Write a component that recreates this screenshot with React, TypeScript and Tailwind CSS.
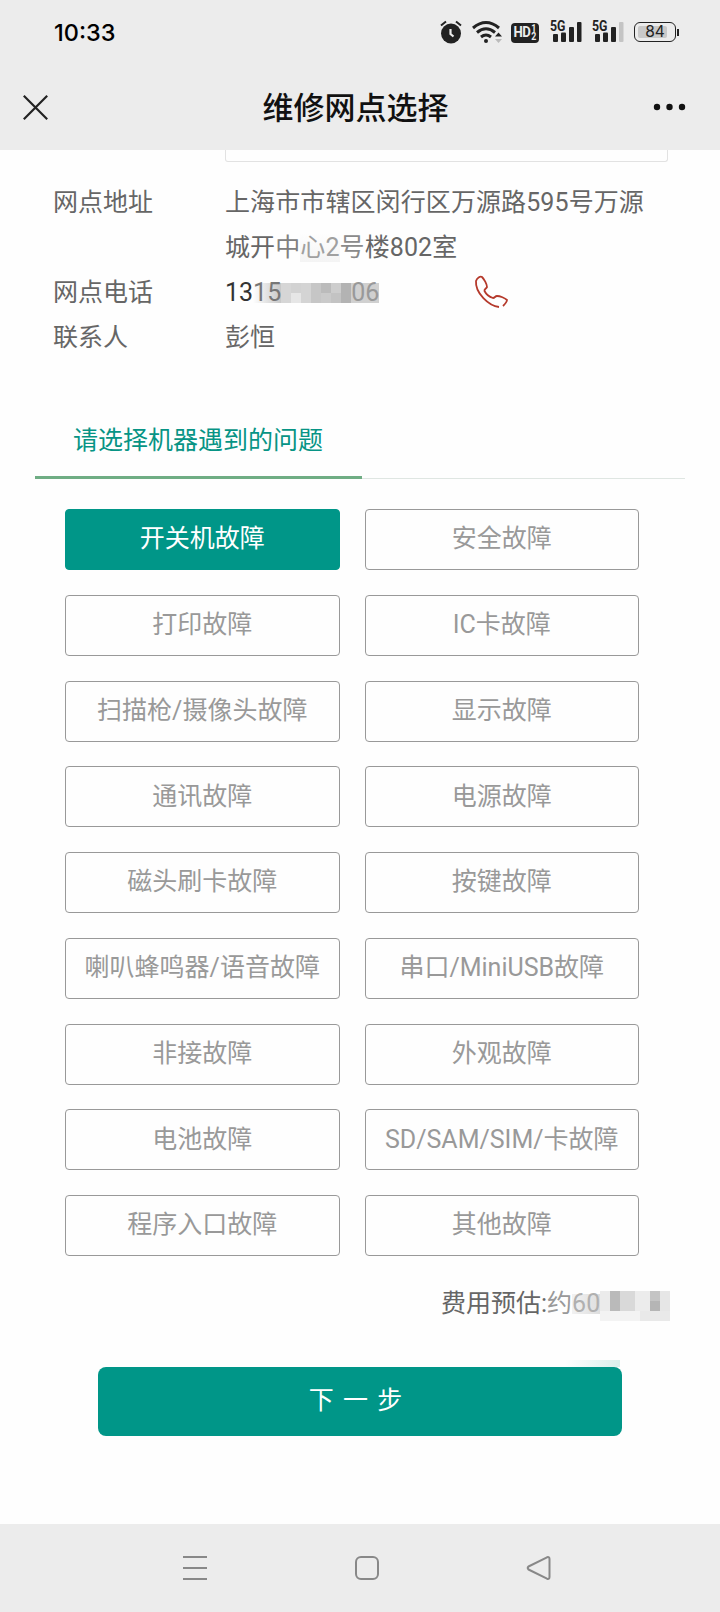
type Tile = { x: number; y: number; w: number; h: number; color: string };

const faults = [
  "开关机故障",
  "安全故障",
  "打印故障",
  "IC卡故障",
  "扫描枪/摄像头故障",
  "显示故障",
  "通讯故障",
  "电源故障",
  "磁头刷卡故障",
  "按键故障",
  "喇叭蜂鸣器/语音故障",
  "串口/MiniUSB故障",
  "非接故障",
  "外观故障",
  "电池故障",
  "SD/SAM/SIM/卡故障",
  "程序入口故障",
  "其他故障",
];

const phoneTiles: Tile[] = [
  { x: 0, y: 0, w: 10, h: 20, color: "#d6d6d6" },
  { x: 10, y: 0, w: 10, h: 10, color: "#d2d2d2" },
  { x: 10, y: 10, w: 10, h: 10, color: "#e6e6e6" },
  { x: 20, y: 0, w: 10, h: 20, color: "#d4d4d4" },
  { x: 30, y: 0, w: 10, h: 20, color: "#c6c6c6" },
  { x: 40, y: 0, w: 10, h: 10, color: "#bbbbbb" },
  { x: 40, y: 10, w: 10, h: 10, color: "#cacaca" },
  { x: 50, y: 0, w: 10, h: 10, color: "#cdcdcd" },
  { x: 50, y: 10, w: 10, h: 10, color: "#c3c3c3" },
  { x: 60, y: 0, w: 10, h: 20, color: "#b3b3b3" },
];

const feeTiles: Tile[] = [
  { x: 0, y: 0, w: 10, h: 20, color: "#ebebeb" },
  { x: 10, y: 0, w: 10, h: 20, color: "#bababa" },
  { x: 20, y: 0, w: 15, h: 20, color: "#d9d9d9" },
  { x: 35, y: 0, w: 15, h: 20, color: "#ececec" },
  { x: 50, y: 0, w: 10, h: 10, color: "#c4c4c4" },
  { x: 50, y: 10, w: 10, h: 10, color: "#b5b5b5" },
  { x: 60, y: 0, w: 10, h: 20, color: "#e6e6e6" },
  { x: 0, y: 20, w: 40, h: 10, color: "#f3f3f3" },
  { x: 40, y: 20, w: 30, h: 10, color: "#e9e9e9" },
];

function Mosaic({ tiles, className }: { tiles: Tile[]; className: string }) {
  return (
    <svg className={className} shapeRendering="crispEdges">
      {tiles.map((t, i) => (
        <rect key={i} x={t.x} y={t.y} width={t.w} height={t.h} fill={t.color} />
      ))}
    </svg>
  );
}

function Signal({ weak }: { weak?: boolean }) {
  return (
    <div className="relative h-[22px] w-[32px]">
      <svg className="absolute inset-0" width="32" height="22" fill="#222">
        <rect x="2" y="13" width="5" height="8" rx="1" />
        <rect x="10" y="11.500" width="5" height="9.500" rx="1" />
        <rect x="18" y="6" width="5" height="15" rx="1" />
        <rect x="26" y="1" width="4.500" height="20" rx="1" fill={weak ? "#c4c4c4" : "#222"} />
      </svg>
      <span className="absolute left-[-1px] top-[-2px] origin-left scale-x-[0.82] font-[Roboto] text-[15px] font-bold leading-[14px] text-[#222]">
        5G
      </span>
    </div>
  );
}

function StatusBar() {
  return (
    <div className="flex h-[64px] items-center justify-between pl-[54px] pr-[41px]">
      <span className="mt-[2px] font-[Inter] text-[23.5px] font-[450] text-black">10:33</span>
      <div className="flex items-center">
        {/* Alarm */}
        <svg width="22" height="24" viewBox="0 0 22 24">
          <circle cx="11" cy="13.500" r="10" fill="#222" />
          <path d="M1 5.5 6 1.5M21 5.5 16 1.5" stroke="#222" strokeWidth="2" />
          <path d="M10.500 9v5l3 2.500" stroke="#ececec" strokeWidth="2.200" fill="none" />
        </svg>
        {/* Wifi */}
        <svg className="ml-[10px]" width="30" height="24" viewBox="0 0 30 24" fill="none">
          <path d="M1 8Q14 -3 27 8" stroke="#222" strokeWidth="3" />
          <path d="M5 12.500Q14 5 23 12.500" stroke="#222" strokeWidth="3" />
          <path d="M9 17Q14 13 19 17" stroke="#222" strokeWidth="3" />
          <circle cx="14" cy="21" r="2" fill="#222" />
          <path d="m23 16.500 3.500-4 3.500 4z" fill="#222" />
          <path d="m23 19 3.500 4 3.500-4z" fill="#bbb" />
        </svg>
        {/* HD badge */}
        <div className="ml-[9px] mt-[1px] flex h-[20px] w-[28px] items-center justify-center rounded-[4px] bg-[#222] text-[#ececec]">
          <div className="flex scale-x-[0.88] items-center font-[Roboto] text-[15px] font-bold tracking-[-0.6px]">
            HD
            <span className="flex flex-col pl-px text-[10px] leading-[8px]">
              <span>1</span>
              <span>2</span>
            </span>
          </div>
        </div>
        <div className="ml-[12px]">
          <Signal />
        </div>
        <div className="ml-[10px]">
          <Signal weak />
        </div>
        {/* Battery */}
        <div className="relative ml-[9px] flex h-[20px] w-[42px] items-center justify-center rounded-[6px] border-[1.5px] border-[#222]">
          <div className="absolute left-[3px] top-[3px] h-[12px] w-[29px] rounded-[2px] bg-[#c9c9c9]" />
          <span className="relative font-[Inter] text-[15.5px] leading-[16px] text-[#222]">84</span>
        </div>
        <div className="ml-[1px] h-[7px] w-[2px] bg-[#222]" />
      </div>
    </div>
  );
}

function TitleBar() {
  return (
    <div className="flex h-[86px] items-center justify-between pl-[23px] pr-[34px]">
      <svg width="25" height="25" viewBox="0 0 25 25" stroke="#222" strokeWidth="2.200">
        <path d="M.8.8 24.200 24.200M24.200.8.8 24.200" />
      </svg>
      <h1 className="ml-[10px] mt-[5px] text-[31px] font-medium text-[#111]">维修网点选择</h1>
      <svg width="33" height="8" fill="#111">
        <circle cx="4" cy="4" r="3.200" />
        <circle cx="16.500" cy="4" r="3.200" />
        <circle cx="29" cy="4" r="3.200" />
      </svg>
    </div>
  );
}

export default function App() {
  return (
    <div className="flex h-[1612px] w-[720px] flex-col bg-[#fefefe] font-[Roboto,'Noto_Sans_CJK_SC',sans-serif] text-[25px]">
      <header className="h-[150px] shrink-0 bg-[#ececec]">
        <StatusBar />
        <TitleBar />
      </header>

      <main className="flex-1">
        <div className="ml-[225px] h-[12px] w-[443px] rounded-b-[3px] border border-t-0 border-[#e2e2e2]" />

        {/* Service point info */}
        <div className="mt-[18px] grid grid-cols-[172px_1fr] pl-[53px] leading-[45px] text-[#666]">
          <span>网点地址</span>
          <span className="tracking-[0.1px]">
            上海市市辖区闵行区万源路595号万源
            <br />
            城开<span className="text-[#808080]">中</span>
            <span className="bg-linear-to-b from-transparent to-[#f4f4f4] text-[#a0a0a0]">心2</span>
            <span className="text-[#8a8a8a]">号</span>楼802室
          </span>
          <span>网点电话</span>
          <div className="relative flex h-[45px] items-center">
            <span className="text-[#333]">13</span>
            <span className="bg-linear-to-r from-[#fefefe] to-[#c8c8c8] leading-[20px] text-[#777]">15</span>
            <Mosaic tiles={phoneTiles} className="h-[20px] w-[70px]" />
            <span className="bg-[#d0d0d0] leading-[20px] text-[#999]">06</span>
            <svg className="absolute left-[249px] top-[5px]" width="34" height="34" viewBox="0 0 34 34" fill="none" stroke="#b53a2c" strokeWidth="1.800">
              <path d="M25 32C15 31 1 18 2 6 3 3 6 1 8 2 10 4 13 9 13 12 12 14 10 14 10.500 16 12 19 16 22 19 23 21 23 21 21 23 21 26 21 31 23 33 25 33 27 31 29 29 31" />
            </svg>
          </div>
          <span>联系人</span>
          <span>彭恒</span>
        </div>

        {/* Tab */}
        <div className="ml-[35px] mt-[53px] flex h-[66px] w-[650px] border-b border-[#dfe6e2]">
          <div className="mb-[-1px] w-[327px] border-b-[3px] border-[#6fad84] pl-[38px] leading-[55px] text-[#079485]">
            请选择机器遇到的问题
          </div>
        </div>

        {/* Fault options */}
        <div className="ml-[65px] mt-[30px] grid w-[574px] grid-cols-2 gap-x-[25px] gap-y-[24.750px]">
          {faults.map((name, index) => (
            <button
              key={name}
              className={`flex h-[61px] items-center justify-center whitespace-nowrap rounded-[4px] border pb-[1px] ${
                index === 0
                  ? "border-[#009688] bg-[#009688] text-white"
                  : "border-[#999] text-[#999]"
              }`}
            >
              {name}
            </button>
          ))}
        </div>

        {/* Estimated fee */}
        <div className="mt-[25px] flex h-[45px] items-center pl-[441px] text-[#666]">
          费用预估:<span className="text-[#999]">约</span>
          <span className="bg-linear-to-r from-[#f2f2f2] to-[#dedede] leading-[20px] text-[#b0b0b0]">60</span>
          <Mosaic tiles={feeTiles} className="mt-[5px] h-[30px] w-[70px]" />
        </div>

        <div className="ml-[565px] mt-[34px] h-[7px] w-[55px] bg-linear-to-r from-[#fefefe] to-[#d9efec]" />
        <button className="ml-[98px] flex h-[69px] w-[524px] items-center justify-center rounded-[8px] bg-[#009688] pb-[1px] pr-[9px] text-white [word-spacing:3px]">
          下 一 步
        </button>
      </main>

      <nav className="flex h-[88px] shrink-0 items-center bg-[#ececec] pl-[182px]">
        <svg width="26" height="26" stroke="#888" strokeWidth="2">
          <path d="M1 2H25M1 13H25M1 24H25" />
        </svg>
        <svg className="ml-[146px]" width="26" height="26" fill="none" stroke="#888" strokeWidth="2">
          <rect x="2" y="2" width="22" height="22" rx="5" />
        </svg>
        <svg className="ml-[146px]" width="26" height="26" fill="none" stroke="#888" strokeWidth="2" strokeLinejoin="round">
          <path d="M2.500 11.500 21 2.300Q23.500 1.500 23.500 4V22Q23.500 24.500 21 23.700L2.500 14.500Q1 13 2.500 11.500Z" />
        </svg>
      </nav>
    </div>
  );
}
